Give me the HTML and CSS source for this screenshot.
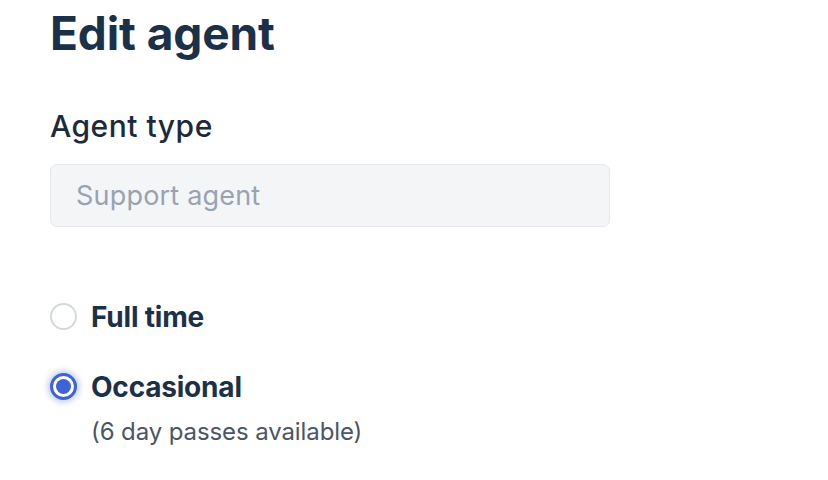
FILE: index.html
```html
<!DOCTYPE html>
<html>
<head>
<meta charset="utf-8">
<link rel="stylesheet" href="styles.css">
</head>
<body>
<main class="page">
  <h1 class="title">Edit agent</h1>
  <section class="field">
    <label class="field-label" for="type">Agent type</label>
    <div class="input" id="type">Support agent</div>
  </section>
  <section class="options">
    <div class="option">
      <span class="radio"></span>
      <span class="option-label">Full time</span>
    </div>
    <div class="option">
      <span class="radio checked"></span>
      <div class="option-text">
        <span class="option-label">Occasional</span>
        <span class="option-hint">(6 day passes available)</span>
      </div>
    </div>
  </section>
</main>
</body>
</html>
```
FILE: styles.css
```css
* { box-sizing: border-box; }
html, body { margin: 0; background: #fff; }
body { font-family: Inter, "Noto Sans", sans-serif; color: #1b2f48; }
.page { padding: 5px 0 0 50px; width: 610px; }
.title { margin: 0; font-size: 46px; font-weight: 700; line-height: 56px; letter-spacing: -0.1px; color: #1b3049; }
.field { margin-top: 47px; }
.field-label { display: block; font-size: 30px; font-weight: 500; line-height: 36px; letter-spacing: 0.5px; color: #1b2a3d; }
.input { margin-top: 20px; height: 63px; border: 1.5px solid #e5e8ee; background: #f4f5f7; border-radius: 7px; padding: 0 25px; display: flex; align-items: center; font-size: 27px; letter-spacing: 0.2px; color: #97a3b3; }
.options { margin-top: 73px; display: flex; flex-direction: column; gap: 36px; }
.option { display: flex; align-items: flex-start; gap: 14px; }
.radio { flex: none; width: 27px; height: 27px; border-radius: 50%; border: 2px solid #d3d8e0; background: #fff; margin-top: 3px; }
.radio.checked { border: 3px solid #3f63d6; box-shadow: 0 0 6px 2px rgba(63, 99, 214, 0.35); position: relative; }
.radio.checked::after { content: ""; position: absolute; left: 3px; top: 3px; width: 15px; height: 15px; border-radius: 50%; background: #3f63d6; }
.option-text { display: flex; flex-direction: column; }
.option-label { font-size: 28px; font-weight: 700; line-height: 34px; letter-spacing: -0.2px; color: #1b3049; }
.option-hint { margin-top: 13px; font-size: 24px; line-height: 30px; letter-spacing: -0.1px; color: #4a5568; }
```
